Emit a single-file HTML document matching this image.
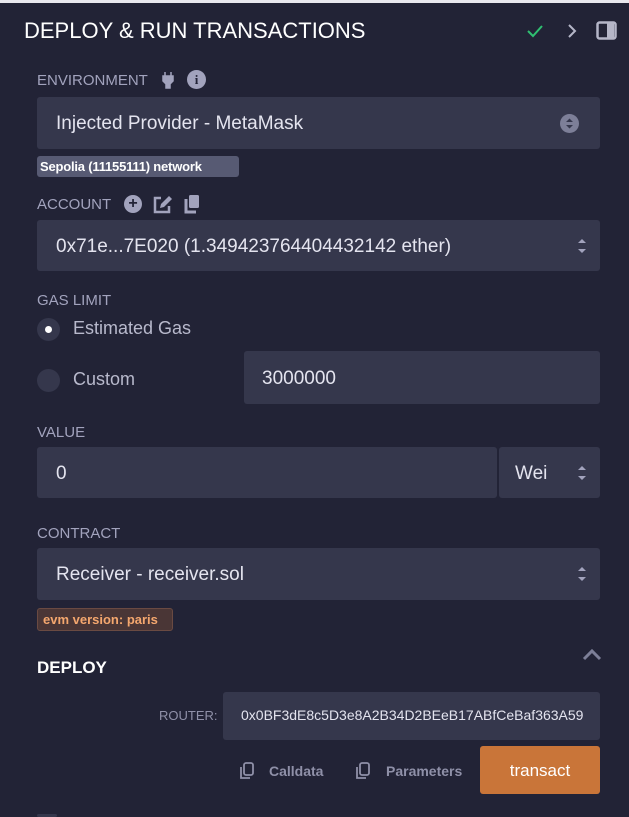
<!DOCTYPE html>
<html><head><style>
*{box-sizing:border-box;margin:0;padding:0}
body{width:629px;height:817px;background:#222336;font-family:"Liberation Sans",sans-serif;position:relative;overflow:hidden;color:#e0e0ee}
.a{position:absolute;white-space:nowrap}
.lbl{color:#a2a3bd;font-size:15px}
.box{background:#35374c;border-radius:3px}
.t{color:#e4e4ef;font-size:19px}
</style></head><body>
<div class="a" style="left:0;top:0;width:629px;height:3px;background:#e9e8ee"></div>
<div class="a" style="left:24px;top:18px;font-size:22px;color:#fff">DEPLOY &amp; RUN TRANSACTIONS</div>
<svg class="a" style="left:526px;top:24px" width="18" height="14"><path d="M2 7l5 5 9-10" stroke="#2fbf71" stroke-width="2" fill="none"/></svg>
<svg class="a" style="left:566px;top:22px" width="12" height="18"><path d="M3 3l6 6-6 6" stroke="#b5b6c8" stroke-width="2" fill="none"/></svg>
<svg class="a" style="left:596px;top:21px" width="22" height="20"><rect x="1.5" y="1.5" width="18" height="16" rx="2" stroke="#b5b6c8" stroke-width="2.5" fill="none"/><rect x="11" y="2" width="7" height="15" fill="#b5b6c8"/></svg>

<div class="a lbl" style="left:37px;top:72px">ENVIRONMENT</div>
<svg class="a" style="left:161px;top:71px" width="14" height="18"><path d="M4 1v4M10 1v4M2 5h10v5l-3 3v4h-4v-4l-3-3z" fill="#a2a3bd" stroke="#a2a3bd" stroke-width="1.5"/></svg>
<div class="a" style="left:187px;top:70px;width:19px;height:19px;border-radius:50%;background:#a2a3bd;color:#222336;font-size:13px;font-weight:bold;text-align:center;line-height:19px;font-family:'Liberation Serif',serif">i</div>
<div class="a box" style="left:37px;top:97px;width:563px;height:52px"></div>
<div class="a t" style="left:56px;top:113px">Injected Provider - MetaMask</div>
<div class="a" style="left:560px;top:114px;width:19px;height:19px;border-radius:50%;background:#7d7f98"></div>
<svg class="a" style="left:564px;top:116px" width="11" height="15"><path d="M2 6l3.5-3.5L9 6zM2 9l3.5 3.5L9 9z" fill="#35374c"/></svg>
<div class="a" style="left:37px;top:156px;width:202px;height:21px;background:#575a73;border-radius:3px;color:#fff;font-size:13px;font-weight:bold;line-height:21px;padding-left:3px;letter-spacing:-0.2px">Sepolia (11155111) network</div>

<div class="a lbl" style="left:37px;top:196px">ACCOUNT</div>
<div class="a" style="left:124px;top:195px;width:18px;height:18px;border-radius:50%;background:#a2a3bd;color:#222336;font-weight:bold;font-size:16px;text-align:center;line-height:18px">+</div>
<svg class="a" style="left:153px;top:195px" width="20" height="19"><path d="M8 3H2v14h14v-6" stroke="#a2a3bd" stroke-width="2.5" fill="none"/><path d="M7 13l1-4 8-8 3 3-8 8z" fill="#a2a3bd"/></svg>
<svg class="a" style="left:183px;top:194px" width="18" height="20"><rect x="6" y="1" width="10" height="13" rx="1.5" fill="#a2a3bd"/><path d="M3 5v13h10" stroke="#a2a3bd" stroke-width="3" fill="none"/></svg>
<div class="a box" style="left:37px;top:220px;width:563px;height:51px"></div>
<div class="a t" style="left:56px;top:236px">0x71e...7E020 (1.349423764404432142 ether)</div>
<svg class="a" style="left:577px;top:237px" width="10" height="18"><path d="M1 6l4-4 4 4zM1 12l4 4 4-4z" fill="#a2a3bd"/></svg>

<div class="a lbl" style="left:37px;top:292px">GAS LIMIT</div>
<div class="a" style="left:37px;top:318px;width:23px;height:23px;border-radius:50%;background:#35374c"></div>
<div class="a" style="left:45px;top:326px;width:7px;height:7px;border-radius:50%;background:#fff"></div>
<div class="a" style="left:73px;top:318px;font-size:18px;color:#b8b9cc">Estimated Gas</div>
<div class="a" style="left:37px;top:369px;width:23px;height:23px;border-radius:50%;background:#35374c"></div>
<div class="a" style="left:73px;top:369px;font-size:18px;color:#b8b9cc">Custom</div>
<div class="a box" style="left:244px;top:351px;width:356px;height:53px"></div>
<div class="a t" style="left:262px;top:368px">3000000</div>

<div class="a lbl" style="left:37px;top:424px">VALUE</div>
<div class="a box" style="left:37px;top:447px;width:460px;height:51px"></div>
<div class="a t" style="left:56px;top:463px">0</div>
<div class="a box" style="left:499px;top:447px;width:101px;height:51px"></div>
<div class="a t" style="left:515px;top:463px">Wei</div>
<svg class="a" style="left:577px;top:464px" width="10" height="18"><path d="M1 6l4-4 4 4zM1 12l4 4 4-4z" fill="#a2a3bd"/></svg>

<div class="a lbl" style="left:37px;top:525px">CONTRACT</div>
<div class="a box" style="left:37px;top:548px;width:563px;height:52px"></div>
<div class="a t" style="left:56px;top:564px">Receiver - receiver.sol</div>
<svg class="a" style="left:577px;top:565px" width="10" height="18"><path d="M1 6l4-4 4 4zM1 12l4 4 4-4z" fill="#a2a3bd"/></svg>
<div class="a" style="left:37px;top:608px;width:136px;height:23px;background:#4a3636;border:1px solid #6a4a42;border-radius:3px;color:#f4a76e;font-size:13px;font-weight:bold;line-height:21px;padding-left:5px">evm version: paris</div>

<div class="a" style="left:37px;top:658px;font-size:17px;font-weight:bold;color:#fff">DEPLOY</div>
<svg class="a" style="left:582px;top:648px" width="20" height="14"><path d="M2 11l8-8 8 8" stroke="#7d7f98" stroke-width="3" fill="none"/></svg>
<div class="a" style="left:159px;top:708px;font-size:13px;color:#8f90a8">ROUTER:</div>
<div class="a box" style="left:223px;top:692px;width:377px;height:48px"></div>
<div class="a" style="left:241px;top:707px;font-size:14px;color:#e4e4ef">0x0BF3dE8c5D3e8A2B34D2BEeB17ABfCeBaf363A59</div>
<svg class="a" style="left:239px;top:762px" width="16" height="18"><rect x="5" y="1" width="9" height="12" rx="2" stroke="#8f90a8" stroke-width="1.8" fill="none"/><path d="M2 5v11h9" stroke="#8f90a8" stroke-width="1.8" fill="none"/></svg>
<div class="a" style="left:269px;top:763px;font-size:14px;font-weight:bold;color:#8f90a8">Calldata</div>
<svg class="a" style="left:355px;top:762px" width="16" height="18"><rect x="5" y="1" width="9" height="12" rx="2" stroke="#8f90a8" stroke-width="1.8" fill="none"/><path d="M2 5v11h9" stroke="#8f90a8" stroke-width="1.8" fill="none"/></svg>
<div class="a" style="left:386px;top:763px;font-size:14px;font-weight:bold;color:#8f90a8">Parameters</div>
<div class="a" style="left:480px;top:746px;width:120px;height:48px;background:#c97539;border-radius:3px;color:#fff;font-size:17px;text-align:center;line-height:50px">transact</div>
<div class="a" style="left:37px;top:814px;width:20px;height:3px;background:#35374c;border-radius:2px"></div>
</body></html>
